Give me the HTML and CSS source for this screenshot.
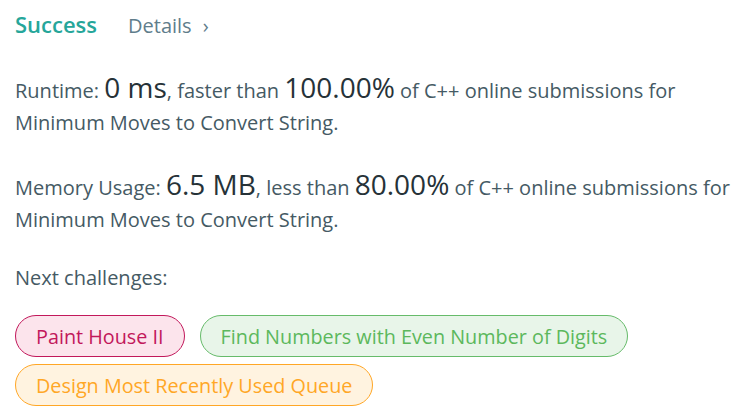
FILE: index.html
```html
<!DOCTYPE html>
<html>
<head>
<meta charset="utf-8">
<link rel="stylesheet" href="styles.css">
</head>
<body>
<div class="page">
  <div class="header">
    <span class="status">Success</span>
    <span class="details">Details <span class="chev">›</span></span>
  </div>
  <p class="stat"><span>Runtime: </span><span class="big">0 ms</span><span>, faster than </span><span class="big">100.00%</span><span> of C++ online submissions for</span> <span>Minimum Moves to Convert String.</span></p>
  <p class="stat"><span>Memory Usage: </span><span class="big">6.5 MB</span><span>, less than </span><span class="big">80.00%</span><span> of C++ online submissions for</span> <span>Minimum Moves to Convert String.</span></p>
  <p class="next">Next challenges:</p>
  <div class="tags">
    <span class="tag hard">Paint House II</span>
    <span class="tag easy">Find Numbers with Even Number of Digits</span>
    <span class="tag medium">Design Most Recently Used Queue</span>
  </div>
</div>
</body>
</html>
```
FILE: styles.css
```css
html, body {
  margin: 0;
  padding: 0;
  background: #fff;
}
.page {
  padding: 8px 0 0 15px;
  font-family: "Open Sans", "Noto Sans", sans-serif;
  font-size: 20px;
  color: #455a64;
}
.header {
  display: flex;
  align-items: baseline;
  gap: 31px;
  line-height: 32px;
}
.status {
  font-size: 22px;
  font-weight: 600;
  color: #26a69a;
}
.details {
  font-size: 20px;
  color: #607d8b;
}
.chev {
  margin-left: 6px;
}
.stat {
  margin: 33px 0 0;
  line-height: 32px;
}
.big {
  font-size: 28px;
  line-height: 20px;
  color: #263238;
}
.next {
  margin: 26px 0 0;
  line-height: 32px;
}
.tags {
  display: flex;
  flex-wrap: wrap;
  gap: 7px 15px;
  margin-top: 21px;
  padding-right: 20px;
}
.tag {
  display: inline-flex;
  align-items: center;
  height: 40px;
  padding: 0 20px;
  border: 1px solid;
  border-radius: 21px;
  font-size: 19.8px;
}
.hard {
  color: #c2185b;
  border-color: #c2185b;
  background: #fce4ec;
}
.easy {
  color: #5cb85c;
  border-color: #66bb6a;
  background: #e8f5e9;
}
.medium {
  color: #ffa726;
  border-color: #ffa726;
  background: #fff3e0;
}
```
